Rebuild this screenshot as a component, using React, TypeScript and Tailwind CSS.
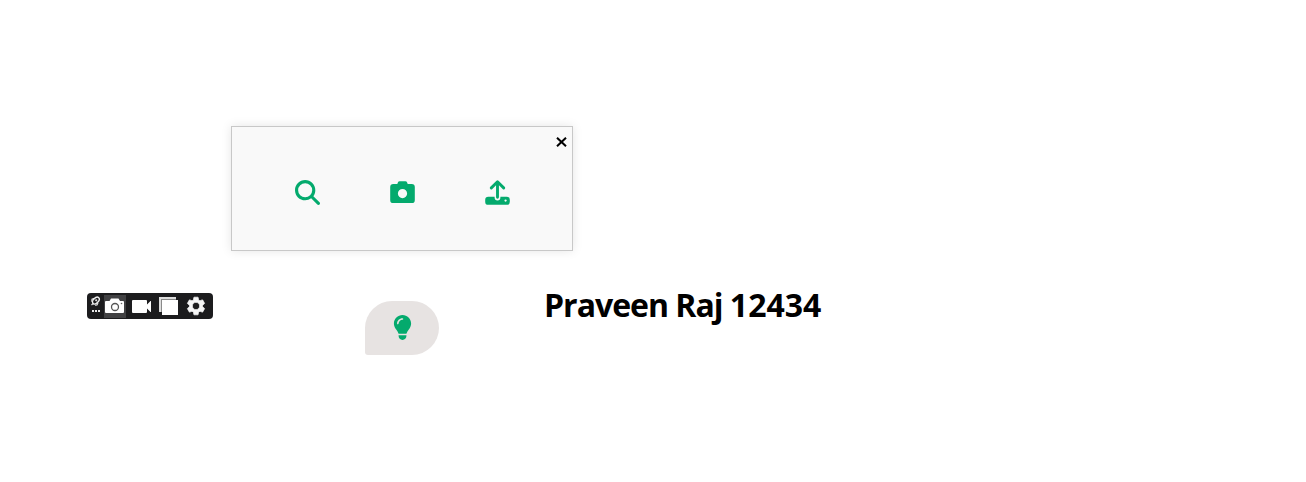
import type { SVGProps } from 'react';
import { FaLightbulb, FaMagnifyingGlass } from 'react-icons/fa6';

function CameraIcon(props: SVGProps<SVGSVGElement>) {
  return (
    <svg viewBox="0 0 26 26" fill="currentColor" fillRule="evenodd" {...props}>
      <path d="M7.6 4.1 8.2 2.6A2 2 0 0 1 10 1.300h6a2 2 0 0 1 1.800 1.300l.6 1.500H22.5A3.3 3.3 0 0 1 25.8 7.400V20.700A3.300 3.300 0 0 1 22.5 24H3.500A3.300 3.300 0 0 1 .2 20.700V7.400A3.300 3.300 0 0 1 3.500 4.100ZM13 9.300a4.800 4.800 0 1 0 0 9.600a4.800 4.800 0 1 0 0-9.600Z" />
    </svg>
  );
}

function UploadIcon(props: SVGProps<SVGSVGElement>) {
  return (
    <svg viewBox="0 0 26 26" fill="none" {...props}>
      <path
        fill="currentColor"
        fillRule="evenodd"
        d="M3.500 17.300H10v1a3 3 0 0 0 6 0v-1h6.500A3.300 3.300 0 0 1 25.800 20.600V22.500A3.300 3.300 0 0 1 22.500 25.800H3.500A3.300 3.300 0 0 1 .2 22.500V20.600A3.300 3.300 0 0 1 3.500 17.300ZM21.400 20.200a1.200 1.200 0 1 0 0 2.400a1.200 1.200 0 1 0 0-2.400Z"
      />
      <path
        stroke="currentColor"
        strokeWidth="3"
        strokeLinecap="round"
        strokeLinejoin="round"
        d="M13 18V2M6.600 8.200 13 1.900l6.400 6.300"
      />
    </svg>
  );
}

function CaptureToolbar() {
  return (
    <div className="mt-[293px] ml-[87px] flex h-[26px] w-[126px] shrink-0 items-center rounded-[4px] bg-[#1c1c1e] text-white">
      <div className="flex w-[17px] justify-center">
        <svg className="h-[26px] w-[17px]" viewBox="0 0 17 26" fill="none">
          <ellipse cx="8.900" cy="7.600" rx="4" ry="2.500" transform="rotate(-45 8.900 7.600)" stroke="#f1f1f1" strokeWidth="1.400" />
          <path stroke="#e4e4e4" strokeWidth="1.200" d="M7.500 5.400 5 6.300 4.800 8.700M11 9.800 10 12 8 12.100M4.500 12l2-2" />
          <circle cx="9.200" cy="7.300" r="1.100" fill="#ddd" />
          <path fill="#ececec" d="M5 17h2v2H5zM8 17h2v2H8zM11 17h2v2h-2z" />
        </svg>
      </div>
      <div className="h-[23px] w-[22px] bg-[#414143]">
        <svg className="h-[23px] w-[22px]" viewBox="0 0 22 23">
          <path
            fill="white"
            d="M1 7a1 1 0 0 1 1-1h3.500L7 3.600h7.500L16 6h3a1 1 0 0 1 1 1v10a1 1 0 0 1-1 1H2a1 1 0 0 1-1-1Z"
          />
          <circle cx="11" cy="12" r="3.500" fill="none" stroke="#555" strokeWidth="1.300" />
          <circle cx="17.500" cy="8.500" r=".8" fill="#666" />
        </svg>
      </div>
      <svg className="ml-[6px] h-[13px] w-[20px]" viewBox="0 0 20 13" fill="white">
        <path d="M1 0h13a1 1 0 0 1 1 1v3.500L18.500 1H19v11h-.5L15 8.500V12a1 1 0 0 1-1 1H1a1 1 0 0 1-1-1V1a1 1 0 0 1 1-1Z" />
      </svg>
      <svg className="ml-[7px] h-[18px] w-[20px]" viewBox="0 0 20 18">
        <path fill="#dedede" d="M0 0h17v3H3v12H0Z" />
        <path fill="#8a8a8a" d="M2 2h15v1H3v12H2Z" />
        <path fill="white" d="M3 3h16v15H3z" />
      </svg>
      <svg className="ml-[6px] h-[22px] w-[22px]" viewBox="0 0 24 24" fill="#f6f6f6" stroke="#f6f6f6" strokeWidth=".8" strokeLinejoin="round">
        <path d="M19.140 12.940c.04-.3.060-.61.060-.94 0-.32-.02-.64-.07-.94l2.030-1.580a.49.49 0 0 0 .12-.61l-1.920-3.320a.488.488 0 0 0-.59-.22l-2.390.96c-.5-.38-1.030-.7-1.620-.94l-.36-2.540a.484.484 0 0 0-.48-.41h-3.840c-.24 0-.43.17-.47.410l-.36 2.540c-.59.240-1.130.570-1.620.940l-2.390-.96c-.22-.08-.47 0-.59.220L2.740 8.870c-.12.210-.08.470.12.610l2.030 1.580c-.05.300-.09.630-.09.940s.02.640.07.940l-2.030 1.580a.49.49 0 0 0-.12.610l1.920 3.320c.12.220.37.290.59.220l2.390-.96c.5.380 1.030.700 1.620.940l.36 2.540c.05.240.24.410.48.410h3.840c.24 0 .44-.17.47-.41l.36-2.540c.59-.24 1.130-.56 1.620-.94l2.390.96c.22.080.47 0 .59-.22l1.920-3.320c.12-.22.070-.47-.12-.61l-2.010-1.580ZM12 16c-2.200 0-4-1.800-4-4s1.800-4 4-4 4 1.800 4 4-1.800 4-4 4Z" />
      </svg>
    </div>
  );
}

export default function App() {
  return (
    <main className="flex h-[482px] w-full items-start overflow-hidden bg-white">
      <CaptureToolbar />
      <div className="ml-[18px] flex w-[342px] shrink-0 flex-col items-center pt-[126px]">
        <section className="flex h-[125px] w-full flex-col border border-[#c8c8c8] bg-[#f9f9f9] shadow-[0_0_10px_rgba(0,0,0,0.1)]">
          <div className="flex h-[31px] justify-end pt-[10px] pr-[5px]">
            <button aria-label="Close" className="h-[10px] w-[11px] text-black">
              <svg className="h-[10px] w-[11px]" viewBox="0 0 11 10" fill="none" stroke="currentColor" strokeWidth="2">
                <path d="m1 .7 9 8.600M10 .7 1 9.300" />
              </svg>
            </button>
          </div>
          <div className="flex justify-between pt-[22px] pr-[62px] pl-[63px] text-[#04aa6d]">
            <button aria-label="Search">
              <FaMagnifyingGlass className="size-[25px]" />
            </button>
            <button aria-label="Take photo">
              <CameraIcon className="size-[25px]" />
            </button>
            <button aria-label="Upload">
              <UploadIcon className="size-[25px]" />
            </button>
          </div>
        </section>
        <button
          aria-label="Suggestions"
          className="mt-[50px] flex h-[54px] w-[74px] items-center justify-center rounded-[27px] rounded-bl-[3px] bg-[#e7e3e2] pb-[2px] text-[#04aa6d]"
        >
          <FaLightbulb className="size-[25px]" />
        </button>
      </div>
      <h1 className="mt-[283px] -ml-[29px] font-['Open_Sans','Noto_Sans',sans-serif] text-[32px] leading-[43px] font-bold tracking-[-1px] whitespace-nowrap text-black">
        Praveen Raj <span className="tracking-normal">12434</span>
      </h1>
    </main>
  );
}
